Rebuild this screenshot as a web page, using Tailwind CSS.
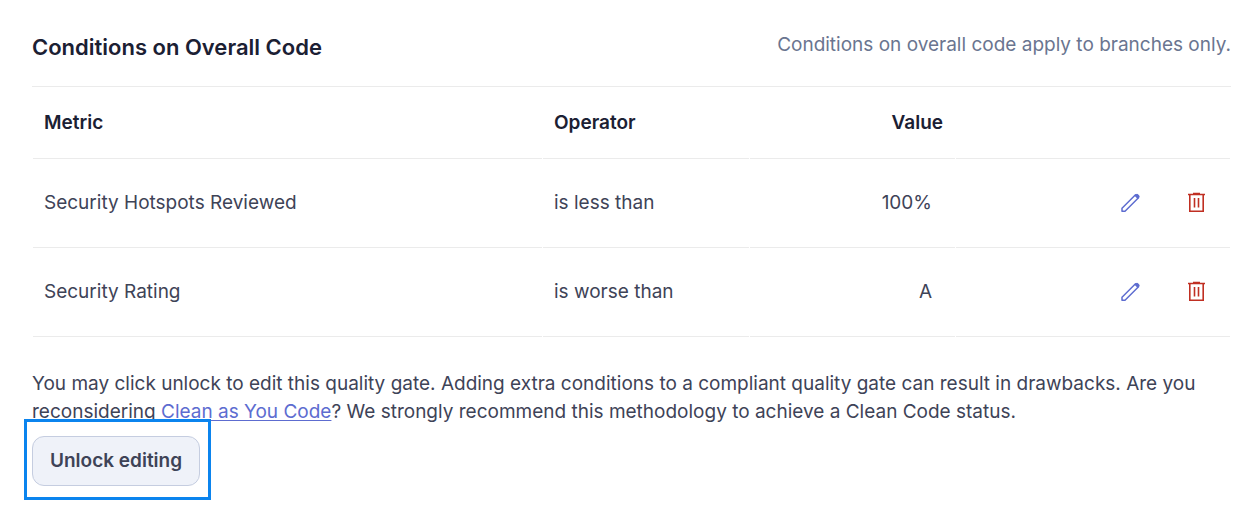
<!DOCTYPE html>
<html lang="en">
<head>
  <meta charset="UTF-8">
  <title>Quality Gate Conditions</title>
  <script src="https://cdn.jsdelivr.net/npm/@tailwindcss/browser@4"></script>
</head>
<body class="bg-white text-[#3e4357] font-['Inter',sans-serif] text-[19px] leading-7 pl-8 pr-[27px] pt-8 pb-5">

  <div class="flex justify-between items-start h-[54px]">
    <h2 class="text-[22px] leading-[30px] font-semibold text-[#1b2033]">Conditions on Overall Code</h2>
    <p class="text-[#6a7590] leading-[26px]">Conditions on overall code apply to branches only.</p>
  </div>

  <table class="w-full table-fixed border-separate border-spacing-x-px border-spacing-y-0 border-t border-[#ebebeb]">
    <colgroup>
      <col class="w-[509px]">
      <col class="w-[206px]">
      <col class="w-[205px]">
      <col>
    </colgroup>
    <thead>
      <tr class="h-[72px] text-[#1b2033]">
        <th class="border-b border-[#ebebeb] px-[11px] font-semibold text-left">Metric</th>
        <th class="border-b border-[#ebebeb] px-[11px] font-semibold text-left">Operator</th>
        <th class="border-b border-[#ebebeb] px-3 font-semibold text-right">Value</th>
        <th class="border-b border-[#ebebeb]"></th>
      </tr>
    </thead>
    <tbody>
      <tr class="h-[89px]">
        <td class="border-b border-[#ebebeb] px-[11px]">Security Hotspots Reviewed</td>
        <td class="border-b border-[#ebebeb] px-[11px]">is less than</td>
        <td class="border-b border-[#ebebeb] pr-[23px] text-right">100%</td>
        <td class="border-b border-[#ebebeb] pr-[21px]">
          <div class="flex justify-end gap-[42px]">
            <button aria-label="Edit condition" class="text-[#5d6cd0]">
              <svg class="size-6" viewBox="0 0 24 24" fill="none" stroke="currentColor" stroke-width="1.5" stroke-linejoin="round"><path d="M3 20.200v-3L16.500 3.700l3 3L6 20.200z"/><path d="M15.500 4.700l1.500-1.500a1.400 1.400 0 0 1 2 0l1.200 1.200a1.400 1.400 0 0 1 0 2L18.700 7.900z" fill="currentColor" stroke="none"/></svg>
            </button>
            <button aria-label="Delete condition" class="text-[#c02f22]">
              <svg class="size-6" viewBox="0 0 24 24" fill="none" stroke="currentColor" stroke-width="1.6"><path d="M3 3.500h17M8 2.500h7M4.800 3.500V20.200h13.400V3.500M9.500 7v9.500M13.500 7v9.500"/></svg>
            </button>
          </div>
        </td>
      </tr>
      <tr class="h-[89px]">
        <td class="border-b border-[#ebebeb] px-[11px]">Security Rating</td>
        <td class="border-b border-[#ebebeb] px-[11px]">is worse than</td>
        <td class="border-b border-[#ebebeb] pr-[23px] text-right">A</td>
        <td class="border-b border-[#ebebeb] pr-[21px]">
          <div class="flex justify-end gap-[42px]">
            <button aria-label="Edit condition" class="text-[#5d6cd0]">
              <svg class="size-6" viewBox="0 0 24 24" fill="none" stroke="currentColor" stroke-width="1.5" stroke-linejoin="round"><path d="M3 20.200v-3L16.500 3.700l3 3L6 20.200z"/><path d="M15.500 4.700l1.500-1.500a1.400 1.400 0 0 1 2 0l1.200 1.200a1.400 1.400 0 0 1 0 2L18.700 7.900z" fill="currentColor" stroke="none"/></svg>
            </button>
            <button aria-label="Delete condition" class="text-[#c02f22]">
              <svg class="size-6" viewBox="0 0 24 24" fill="none" stroke="currentColor" stroke-width="1.6"><path d="M3 3.500h17M8 2.500h7M4.800 3.500V20.200h13.400V3.500M9.500 7v9.500M13.500 7v9.500"/></svg>
            </button>
          </div>
        </td>
      </tr>
    </tbody>
  </table>

  <p class="mt-[33px]">You may click unlock to edit this quality gate. Adding extra conditions to a compliant quality gate can result in drawbacks. Are you reconsidering <a href="#" class="text-[#5d6cd0] underline decoration-1 underline-offset-2 [text-decoration-skip-ink:none]">Clean as You Code</a>? We strongly recommend this methodology to achieve a Clean Code status.</p>

  <div class="relative inline-block mt-[10px]">
    <button class="block h-[50px] px-[17px] rounded-xl border border-[#c5cde0] bg-[#eff2f9] font-semibold">Unlock editing</button>
    <div class="absolute -top-[17px] -bottom-[14px] -left-2 -right-[11px] border-3 border-[#0b84ee] pointer-events-none"></div>
  </div>

</body>
</html>
